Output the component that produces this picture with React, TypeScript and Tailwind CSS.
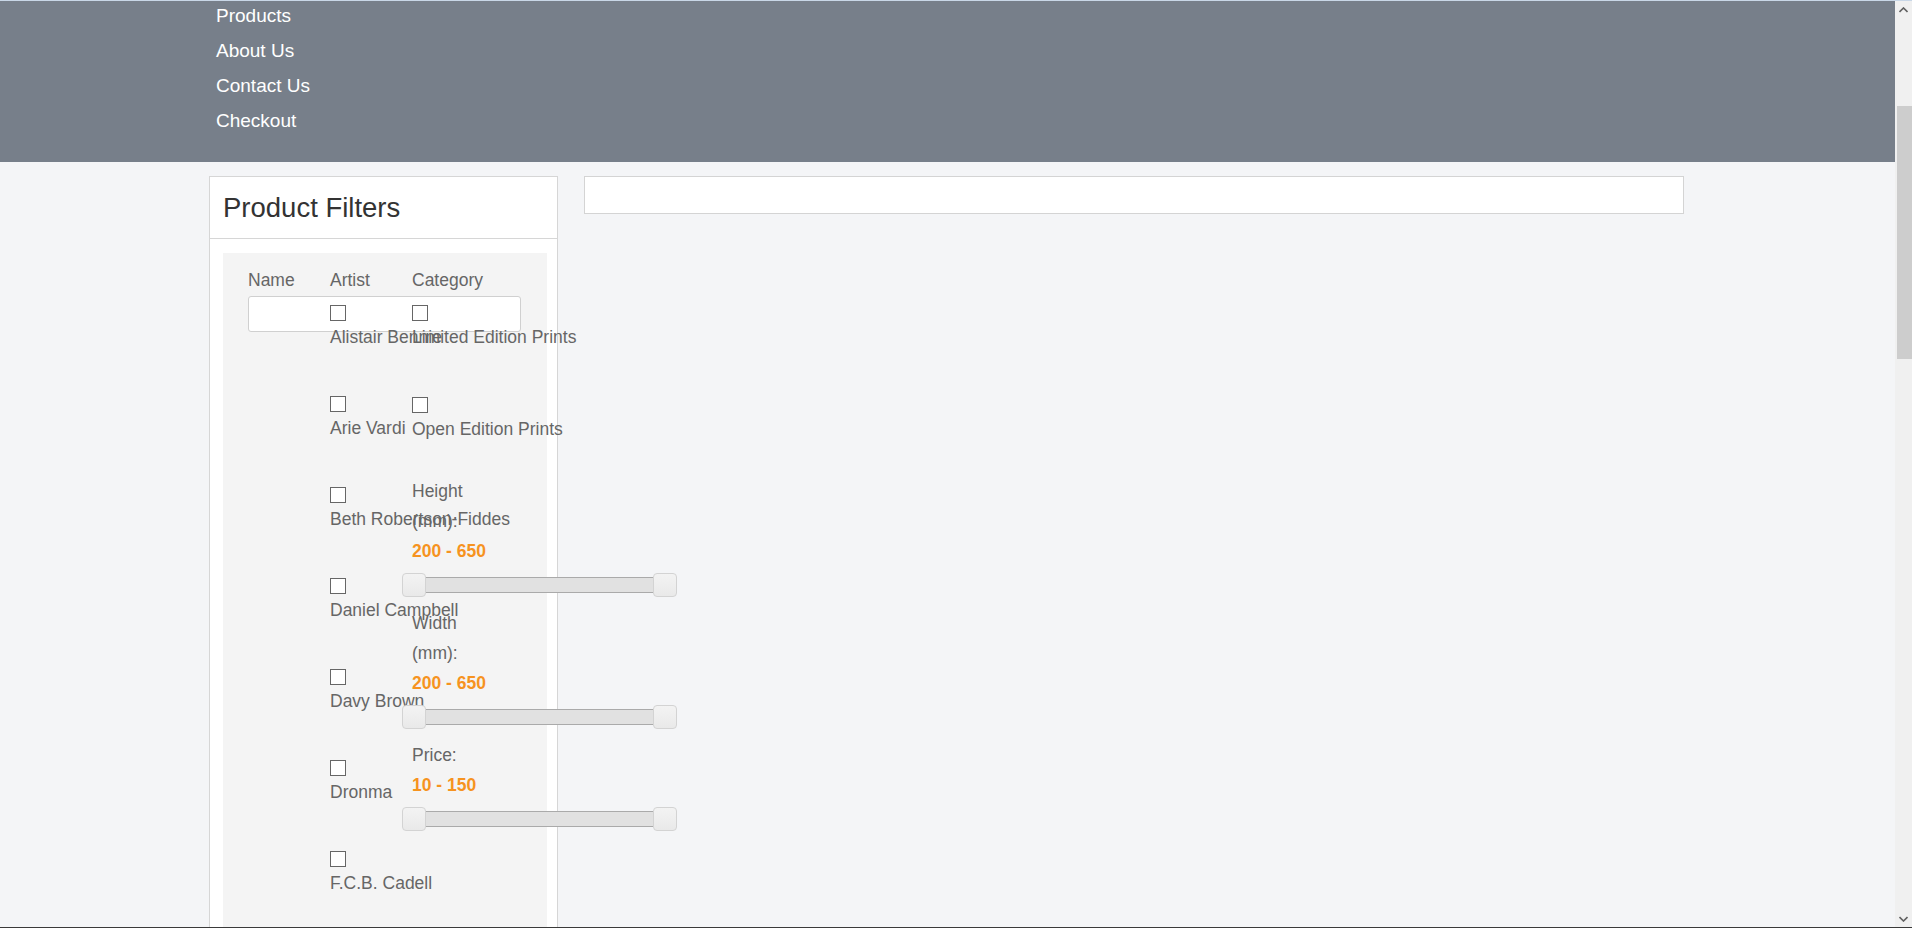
import React from "react";

const navLinks = ["Products", "About Us", "Contact Us", "Checkout"];

const artists = [
  "Alistair Bennie",
  "Arie Vardi",
  "Beth Robertson-Fiddes",
  "Daniel Campbell",
  "Davy Brown",
  "Dronma",
  "F.C.B. Cadell",
];

const categories = ["Limited Edition Prints", "Open Edition Prints"];

const ranges = [
  { label: "Height (mm):", value: "200 - 650" },
  { label: "Width (mm):", value: "200 - 650" },
  { label: "Price:", value: "10 - 150" },
];

function CheckItem({ label, className }: { label: string; className: string }) {
  return (
    <div className={className}>
      <span className="block h-4 w-4 border border-[#666] bg-white" />
      <div className="mt-[4px] whitespace-nowrap leading-6">{label}</div>
    </div>
  );
}

function RangeSlider() {
  return (
    <div className="relative -ml-[10px] mt-[7px] mb-[11px] h-6 w-[275px]">
      <div className="absolute left-[12px] right-[12px] top-[4px] h-4 border-y border-[#aaa] bg-[#e1e1e1]" />
      <span className="absolute left-0 top-0 h-6 w-6 rounded-[4px] border border-[#d3d3d3] bg-linear-to-b from-[#f3f3f3] to-[#e9e9e9]" />
      <span className="absolute right-0 top-0 h-6 w-6 rounded-[4px] border border-[#d3d3d3] bg-linear-to-b from-[#f3f3f3] to-[#e9e9e9]" />
    </div>
  );
}

function Scrollbar() {
  return (
    <aside className="flex w-[17px] shrink-0 flex-col bg-[#f0f0f0]">
      <div className="flex h-[17px] items-center justify-center">
        <svg width="9" height="6" viewBox="0 0 9 6">
          <polyline points="0.5,5 4.5,1 8.5,5" fill="none" stroke="#606060" strokeWidth="1.6" />
        </svg>
      </div>
      <div className="ml-[2px] mt-[88px] h-[253px] w-[15px] bg-[#cdcdcd]" />
      <div className="flex-1" />
      <div className="flex h-[17px] items-center justify-center">
        <svg width="9" height="6" viewBox="0 0 9 6">
          <polyline points="0.5,1 4.5,5 8.5,1" fill="none" stroke="#606060" strokeWidth="1.6" />
        </svg>
      </div>
    </aside>
  );
}

export default function App() {
  return (
    <div className="flex h-[928px] flex-col overflow-hidden font-['Liberation_Sans',Arial,sans-serif]">
      <div className="h-px shrink-0 bg-[#c9d7e7]" />
      <div className="flex min-h-0 flex-1">
        <main className="min-w-0 flex-1 overflow-hidden bg-[#f4f5f7]">
          {/* Header nav */}
          <header className="h-[161px] overflow-hidden bg-[#777f8a]">
            <ul className="mx-auto -mt-[3px] w-[1477px] pl-[7px] text-[19px] leading-[35px] text-white">
              {navLinks.map((link) => (
                <li key={link}>{link}</li>
              ))}
            </ul>
          </header>

          <div className="mx-auto flex w-[1477px] items-start gap-[26px] pt-[14px]">
            {/* Filters */}
            <section className="w-[349px] shrink-0 border border-[#d6d6d6] bg-white">
              <div className="flex h-[62px] items-center border-b border-[#d6d6d6] px-[13px] text-[27.5px] text-[#333]">
                Product Filters
              </div>
              <div className="px-[13px] pt-[14px]">
                <div className="grid w-[324px] grid-cols-[82px_82px_82px] bg-[#f4f4f4] pb-[20px] pl-[25px] pt-[15px] text-[17.5px] text-[#666]">
                  <div>
                    <div className="leading-6">Name</div>
                    <input
                      type="text"
                      className="mt-[4px] block h-[36px] w-[273px] rounded-[3px] border border-[#d0d0d0] bg-white"
                    />
                  </div>
                  <div>
                    <div className="leading-6">Artist</div>
                    <div className="mt-[13px]">
                      {artists.map((a) => (
                        <CheckItem key={a} label={a} className="h-[91px]" />
                      ))}
                    </div>
                  </div>
                  <div>
                    <div className="leading-6">Category</div>
                    <div className="mt-[13px]">
                      <CheckItem label={categories[0]} className="h-[92px]" />
                      <CheckItem label={categories[1]} className="h-[79px]" />
                    </div>
                    {ranges.map((r) => (
                      <div key={r.label}>
                        <div className="leading-[30px]">{r.label}</div>
                        <div className="font-bold leading-[30px] text-[#f6931f]">{r.value}</div>
                        <RangeSlider />
                      </div>
                    ))}
                  </div>
                </div>
              </div>
            </section>

            {/* Results */}
            <section className="h-[38px] w-[1100px] border border-[#d4d4d4] bg-white" />
          </div>
        </main>
        <Scrollbar />
      </div>
      <div className="h-px shrink-0 bg-[#3a3a3a]" />
    </div>
  );
}
